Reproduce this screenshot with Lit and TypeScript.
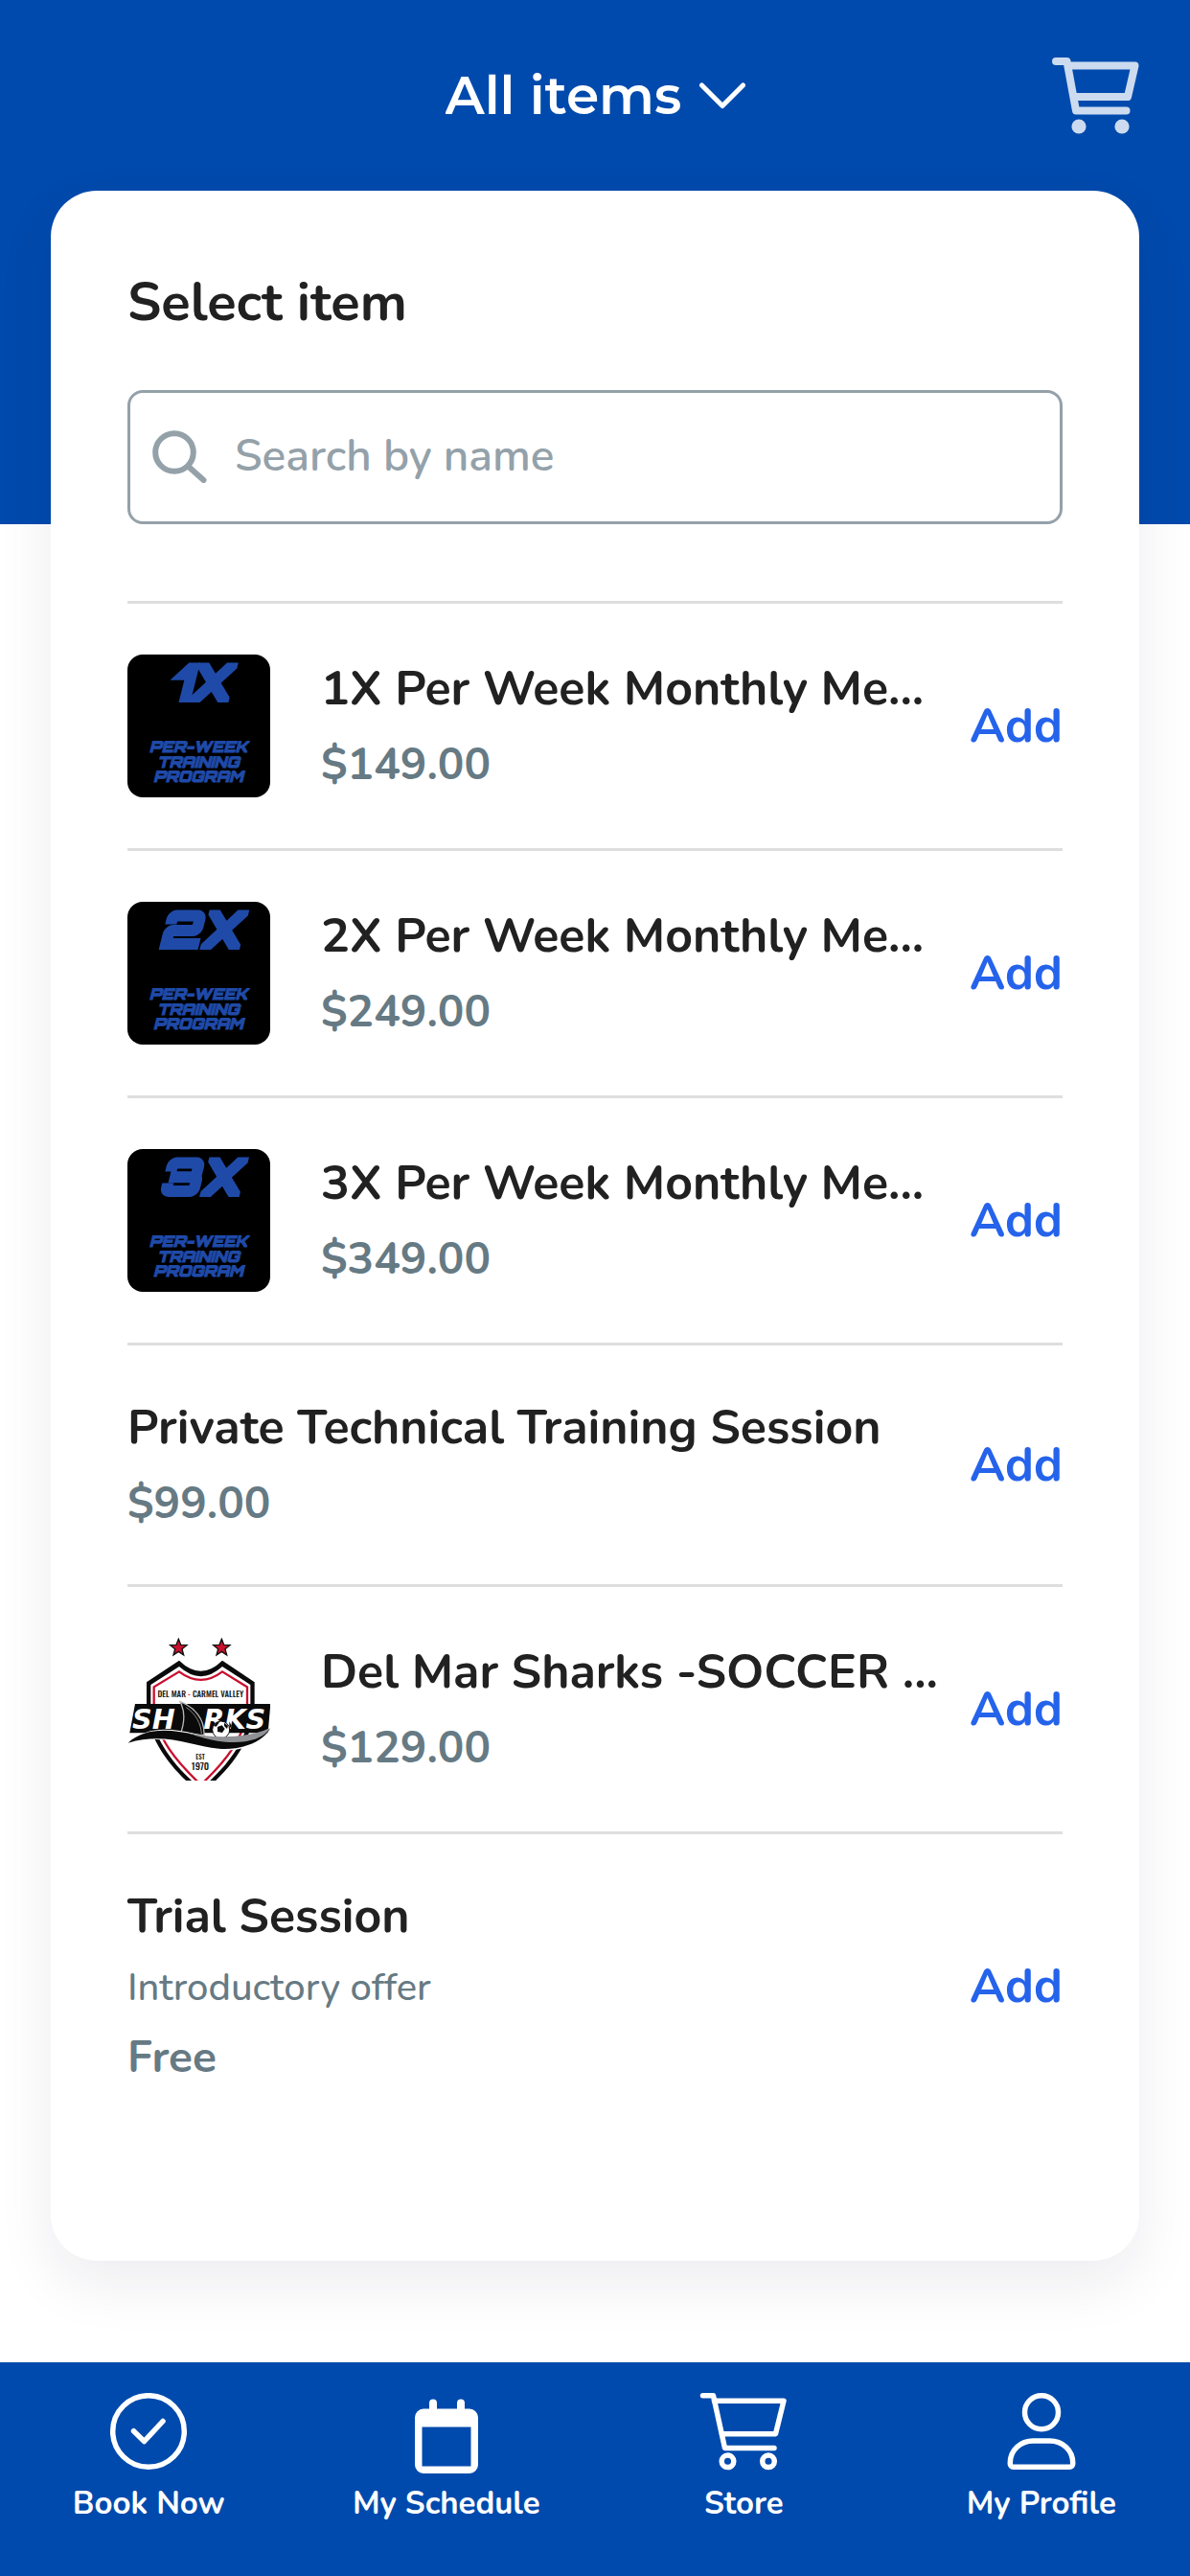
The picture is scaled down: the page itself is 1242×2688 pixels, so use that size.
import { LitElement, html, svg, css, nothing, type TemplateResult } from "lit";
import { customElement, property } from "lit/decorators.js";

interface StoreItem {
  name: string;
  price: string;
  note?: string;
  art?: "program" | "sharks";
  badge?: string;
}

const ITEMS: StoreItem[] = [
  { name: "1X Per Week Monthly Me...", price: "$149.00", art: "program", badge: "1X" },
  { name: "2X Per Week Monthly Me...", price: "$249.00", art: "program", badge: "2X" },
  { name: "3X Per Week Monthly Me...", price: "$349.00", art: "program", badge: "3X" },
  { name: "Private Technical Training Session", price: "$99.00" },
  { name: "Del Mar Sharks -SOCCER ...", price: "$129.00", art: "sharks" },
  { name: "Trial Session", price: "Free", note: "Introductory offer" },
];

const cartIcon = html`
  <svg class="cart" viewBox="0 0 91 80" width="91" height="80" fill="none" stroke="currentColor"
    stroke-width="8" stroke-linecap="round" stroke-linejoin="round" aria-hidden="true">
    <path d="M4 4H15.500L25 55.500H77.500" />
    <path d="M17 8.500H86.500L79 41H23" />
    <circle cx="28" cy="72" r="7.600" fill="currentColor" stroke="none" />
    <circle cx="73" cy="72" r="7.600" fill="currentColor" stroke="none" />
  </svg>
`;

const star = (x: number) => svg`
  <path transform="translate(${x} 89)" fill="#c8102e" stroke="#111" stroke-width="4"
    d="M0-27L7-9L26-8L11 4L16 23L0 12L-16 23L-11 4L-26-8L-7-9Z" />
`;

const sharksArt = html`
  <svg class="art" viewBox="38 58 447 447" role="img" aria-label="Del Mar Sharks crest">
    ${star(198)}${star(333)}
    <path fill="#0a0a0a" d="M200 129Q268 195 335 129L436 197V265C436 385 345 485 268 545C191 485 98 385 98 265V197Z" />
    <path fill="#fff" d="M200 148Q268 209 335 148L423 205V265C423 380 335 475 268 530C201 475 111 380 111 265V205Z" />
    <path fill="#fff" stroke="#c8102e" stroke-width="7"
      d="M200 164Q268 215 335 164L413 212V265C413 370 335 455 268 518C201 455 121 370 121 265V212Z" />
    <text class="crest-name" x="267" y="243" text-anchor="middle">DEL MAR <tspan fill="#c8102e">-</tspan> CARMEL VALLEY</text>
    <path fill="#0a0a0a" d="M62 265H486L478 356H45Z" />
    <text class="crest-word" x="53" y="342">SH</text>
    <text class="crest-word" x="276" y="342">RKS</text>
    <path fill="#0a0a0a" stroke="#b5b5b5" stroke-width="4" d="M203 258C248 275 280 312 278 362H203C217 325 220 290 203 258Z" />
    <path fill="none" stroke="#8a8a8a" stroke-width="3" d="M222 276C252 296 268 326 270 358" />
    <circle cx="331" cy="346" r="27" fill="#fff" stroke="#0a0a0a" stroke-width="3" />
    <path fill="#0a0a0a" d="M320 337L334 332L343 343L335 355L320 352ZM308 334L318 322L326 323L316 336ZM341 324L353 333L350 343L341 334ZM357 320L364 334L357 343Z" />
    <path fill="#fff" d="M38 390C92 336 165 338 250 358C340 380 430 372 488 338C462 392 392 416 325 410C235 402 155 352 38 390Z" />
    <path fill="#0a0a0a" d="M40 387C92 340 165 342 250 362C340 382 425 374 484 343C462 385 392 411 325 405C235 398 160 352 40 387Z" />
    <path fill="#8f9094" d="M225 355C320 376 420 370 485 341C455 388 375 390 320 381C280 374 250 364 225 355Z" />
    <text class="crest-est" x="266" y="438" text-anchor="middle">EST</text>
    <text class="crest-year" x="266" y="471" text-anchor="middle">1970</text>
  </svg>
`;

const programArt = (badge: string) => html`
  <svg class="art program-art" viewBox="0 0 149 149" role="img" aria-label="${badge} per-week training program">
    <rect width="149" height="149" rx="16" fill="#000" />
    <text class="badge" x="75" y="48" text-anchor="middle">${badge}</text>
    <text class="program" x="74" y="102" text-anchor="middle">PER-WEEK</text>
    <text class="program" x="74" y="118" text-anchor="middle">TRAINING</text>
    <text class="program" x="74" y="133" text-anchor="middle">PROGRAM</text>
  </svg>
`;

@customElement("store-item")
class StoreItemRow extends LitElement {
  @property({ attribute: false }) item!: StoreItem;

  static styles = css`
    :host {
      display: flex;
      align-items: center;
      padding: 53px 0;
      border-top: 3px solid #dedede;
    }
    .art {
      flex: none;
      display: block;
      width: 149px;
      height: 149px;
      margin-right: 53px;
      border-radius: 16px;
    }
    .program-art {
      overflow: visible;
    }
    .badge,
    .program {
      font-family: Orbitron, "DejaVu Sans", sans-serif;
      font-weight: 900;
      font-style: italic;
      fill: #1f4aa8;
      stroke: #1f4aa8;
    }
    .badge {
      font-size: 52px;
      stroke-width: 4px;
    }
    .program {
      font-size: 16px;
      stroke-width: 1px;
    }
    .crest-name,
    .crest-est,
    .crest-year {
      font-family: Oswald, "Liberation Sans Narrow", "Liberation Sans", sans-serif;
      font-weight: 500;
      fill: #222;
    }
    .crest-name {
      font-size: 26px;
    }
    .crest-est {
      font-size: 21px;
    }
    .crest-year {
      font-size: 30px;
    }
    .crest-word {
      font-family: "DejaVu Sans", sans-serif;
      font-weight: 700;
      font-style: italic;
      font-size: 86px;
      fill: #fff;
    }
    .text {
      flex: 1;
      min-width: 0;
      display: flex;
      flex-direction: column;
      gap: 14px;
    }
    .name,
    .price,
    .note {
      margin: 0;
      white-space: nowrap;
    }
    .name {
      font-size: 50px;
      line-height: 66px;
      font-weight: 700;
      color: #212121;
    }
    .price {
      font-size: 46px;
      line-height: 63px;
      font-weight: 700;
      color: #667a84;
    }
    .note {
      font-size: 40px;
      line-height: 54px;
      font-weight: 500;
      color: #667a84;
    }
    .add {
      flex: none;
      padding: 0;
      border: 0;
      background: none;
      font: inherit;
      font-size: 50px;
      line-height: 66px;
      font-weight: 700;
      color: #2563eb;
      cursor: pointer;
    }
  `;

  render() {
    const { name, price, note, art, badge } = this.item;
    return html`
      ${art === "program" ? programArt(badge ?? "") : art === "sharks" ? sharksArt : nothing}
      <div class="text">
        <h2 class="name">${name}</h2>
        ${note ? html`<p class="note">${note}</p>` : nothing}
        <p class="price">${price}</p>
      </div>
      <button class="add" type="button">Add</button>
    `;
  }
}

const tabs: { label: string; icon: TemplateResult }[] = [
  {
    label: "Book Now",
    icon: svg`
      <circle cx="46" cy="40" r="37.300" />
      <path d="M30.500 39.700L41.500 50.500L61 29.500" />`,
  },
  {
    label: "My Schedule",
    icon: svg`
      <path fill="currentColor" stroke="none" fill-rule="evenodd"
        d="M22 16.500H70a9 9 0 0 1 9 9V75a9 9 0 0 1-9 9H22a9 9 0 0 1-9-9V25.500a9 9 0 0 1 9-9ZM20.500 35.500V76.500H71.500V35.500Z" />
      <path stroke-width="8" d="M32 10.500V20M61 10.500V20" />`,
  },
  {
    label: "Store",
    icon: svg`
      <path d="M3.500 2.800H14.500L26.500 57.500H78" />
      <path d="M15.500 8.200H88L79.500 42.700H23.500" />
      <circle cx="29.500" cy="71.300" r="6.300" />
      <circle cx="72" cy="71.300" r="6.300" />`,
  },
  {
    label: "My Profile",
    icon: svg`
      <circle cx="46" cy="20.300" r="17.500" />
      <path d="M13.300 73C13.300 59.500 24 50 37.500 50H54.500C68 50 78.700 59.500 78.700 73V74a3.300 3.300 0 0 1-3.300 3.300H16.600A3.300 3.300 0 0 1 13.300 74Z" />`,
  },
];

@customElement("app-root")
class AppRoot extends LitElement {
  static styles = css`
    :host {
      display: flex;
      flex-direction: column;
      min-height: 100vh;
      background: #fff;
      font-family: Nunito, "Open Sans", "Noto Sans", sans-serif;
      color: #212121;
    }
    .top {
      display: grid;
      grid-template-columns: 1fr auto 1fr;
      align-content: start;
      align-items: center;
      padding: 60px 53px 407px;
      background: #004aad;
    }
    .filter {
      grid-column: 2;
      display: flex;
      align-items: center;
      gap: 18px;
      color: #fff;
    }
    .filter-select {
      appearance: none;
      margin: 0;
      padding: 0;
      border: 0;
      background: none;
      color: inherit;
      font-family: Montserrat, "Open Sans", sans-serif;
      font-size: 55px;
      line-height: 80px;
      font-weight: 600;
    }
    .cart-button {
      justify-self: end;
      padding: 0;
      border: 0;
      background: none;
      color: #ccdbef;
      cursor: pointer;
    }
    .cart,
    .chevron {
      display: block;
    }
    .main {
      flex: 1;
      margin-top: -348px;
      padding: 0 53px 106px;
    }
    .card {
      padding: 80px 80px 128px;
      border-radius: 48px;
      background: #fff;
      box-shadow: 0 24px 60px rgba(20, 20, 60, 0.08);
    }
    .title {
      margin: 0 0 54px;
      font-size: 56px;
      line-height: 74px;
      font-weight: 700;
    }
    .search {
      display: flex;
      align-items: center;
      gap: 29px;
      margin-bottom: 80px;
      padding: 33px 23px 37px;
      border: 3px solid #94a1a9;
      border-radius: 16px;
      color: #94a1a9;
    }
    .search-icon {
      flex: none;
    }
    .search-input {
      flex: 1;
      min-width: 0;
      height: 64px;
      padding: 0;
      border: 0;
      outline: 0;
      background: none;
      font: inherit;
      font-size: 46px;
      font-weight: 600;
      color: #212121;
    }
    .search-input::placeholder {
      color: #94a1a9;
      opacity: 1;
    }
    .tabs {
      display: grid;
      grid-template-columns: repeat(4, 1fr);
      padding: 32px 0 55px;
      background: #004aad;
    }
    .tab {
      display: flex;
      flex-direction: column;
      align-items: center;
      gap: 12px;
      color: #fff;
      text-decoration: none;
      font-size: 33px;
      line-height: 40px;
      font-weight: 700;
    }
  `;

  render() {
    return html`
      <header class="top">
        <label class="filter">
          <select class="filter-select" aria-label="Item category">
            <option>All items</option>
          </select>
          <svg class="chevron" viewBox="0 0 48 28" width="48" height="28" fill="none" stroke="currentColor"
            stroke-width="5" stroke-linecap="round" stroke-linejoin="round" aria-hidden="true">
            <path d="M2.500 3L24 24.500L45.500 3" />
          </svg>
        </label>
        <button class="cart-button" type="button" aria-label="Cart">${cartIcon}</button>
      </header>
      <main class="main">
        <section class="card">
          <h1 class="title">Select item</h1>
          <label class="search">
            <svg class="search-icon" viewBox="0 0 57 58" width="57" height="58" fill="none" stroke="currentColor"
              stroke-width="6" stroke-linecap="round" aria-hidden="true">
              <circle cx="23" cy="26" r="19.800" />
              <path d="M37.800 41L53.500 55" />
            </svg>
            <input class="search-input" type="text" placeholder="Search by name" aria-label="Search by name" />
          </label>
          ${ITEMS.map((item) => html`<store-item .item=${item}></store-item>`)}
        </section>
      </main>
      <nav class="tabs">
        ${tabs.map(
          (tab) => html`
            <a class="tab" href="#">
              <svg viewBox="0 0 92 84" width="92" height="84" fill="none" stroke="currentColor"
                stroke-width="5.500" stroke-linecap="round" stroke-linejoin="round" aria-hidden="true">
                ${tab.icon}
              </svg>
              <span>${tab.label}</span>
            </a>
          `
        )}
      </nav>
    `;
  }
}
